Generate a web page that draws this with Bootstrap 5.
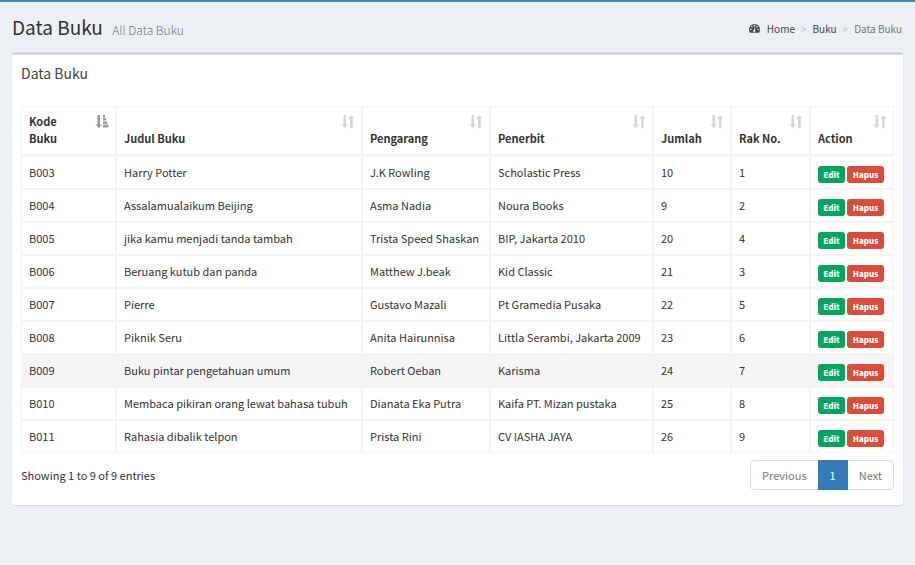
<!DOCTYPE html>
<html lang="id">
<head>
<meta charset="utf-8">
<meta name="viewport" content="width=device-width, initial-scale=1">
<title>Data Buku</title>
<link href="https://cdn.jsdelivr.net/npm/bootstrap@5.3.0/dist/css/bootstrap.min.css" rel="stylesheet">
<style>
body{background:#ecf0f5;color:#333;font:400 11px/17px "Noto Sans CJK SC","Noto Sans",sans-serif;border-top:2px solid #3c8dbc;min-height:100vh}
.page-head{padding:12px 1px 10px 0}
.page-title{font-size:19px;line-height:25px}
.page-title small{font-size:12px;font-weight:300;color:#777;padding-left:5px}
.trail{font-size:10px;line-height:15px;--bs-breadcrumb-divider:'>';--bs-breadcrumb-divider-color:#bbb;--bs-breadcrumb-item-active-color:#777;--bs-breadcrumb-item-padding-x:6px}
.trail a{color:#444;text-decoration:none;gap:6px}
.panel{background:#fff;border-top:3px solid #d2d6de;border-radius:3px;box-shadow:0 1px 1px rgba(0,0,0,.1);padding:9px 9px 15px}
.panel-title{font-size:14px;line-height:18px;color:#444}
.books{table-layout:fixed;border-collapse:separate;border-spacing:0;color:#333;--bs-table-hover-bg:#f5f5f5}
.books>:not(caption)>*>*{padding:7px;border:1px solid #f4f4f4;white-space:nowrap}
.books>thead>tr>th{border-bottom-width:2px;padding:6px 6px 7px 7px;vertical-align:bottom}
.books>tbody>tr>.acts{padding:9px 7px 5px}
.w-kode{width:95px}.w-karang{width:128px}.w-terbit{width:163px}.w-jumlah{width:78px}.w-rak{width:79px}.w-aksi{width:84px}
.sorter{background:none;border:0;padding:0;color:inherit;font-weight:700;min-height:34px;text-align:left}
.sorter svg{width:14px;height:14px;margin-top:2px;color:#d6d6d6}
.sorter svg.on{color:#999}
.books>tbody>tr.picked>td{background:#f5f5f5;box-shadow:none}
.act{font-size:8px;line-height:17px;font-weight:900;padding:0 5px;border:0;border-radius:3px;color:#fff}
.acts>div{gap:2px}
.act-edit{background:#00a65a;min-width:27px}.act-del{background:#dd4b39;min-width:37px}
.pager{--bs-pagination-font-size:11px;--bs-pagination-padding-x:11px;--bs-pagination-padding-y:6px;--bs-pagination-color:#777;--bs-pagination-border-color:#ddd;--bs-pagination-border-radius:4px;--bs-pagination-active-bg:#337ab7;--bs-pagination-active-border-color:#337ab7;--bs-pagination-disabled-color:#777;--bs-pagination-disabled-bg:#fff;--bs-pagination-disabled-border-color:#ddd;line-height:16px}
.foot{padding-top:7px}
</style>
</head>
<body>
<svg class="d-none" aria-hidden="true">
<symbol id="both" viewBox="0 0 14 14"><path fill="currentColor" d="M2.500 0h2.500v9.500h2L3.700 13.200.4 9.500h2.100zM9.100 13.200h2.500V3.700h2L10.300 0 7 3.700h2.100z"/></symbol>
<symbol id="asc" viewBox="0 0 14 14"><path fill="currentColor" d="M2.500 0h2.500v9.500h2L3.700 13.200.4 9.500h2.100zM8 0h2v2.200H8zM8 3h3v2.600H8zM8 6.400h4.200V9H8zM8 9.800h5.500v2.600H8z"/></symbol>
<symbol id="dash" viewBox="0 0 14 12"><path fill="currentColor" fill-rule="evenodd" d="M7 1a6 6 0 0 0-6 6c0 1.300.4 2.500 1 3.500h10c.6-1 1-2.200 1-3.500a6 6 0 0 0-6-6zM3 6.200a.9.9 0 1 0 0 1.800.9.900 0 0 0 0-1.800zM4.200 3.300a.9.900 0 1 0 0 1.800.9.900 0 0 0 0-1.800zM7 2a.9.900 0 1 0 0 1.800A.9.900 0 0 0 7 2zM9.800 3.300a.9.900 0 1 0 0 1.800.9.900 0 0 0 0-1.800zM11 6.200A.9.900 0 1 0 11 8a.9.900 0 0 0 0-1.800zM7.100 4.800l-.6 2.500a1.300 1.300 0 1 0 1 .2L8 5z"/></symbol>
</svg>
<div class="container-fluid px-2 px-sm-0">
<div class="mx-sm-2 px-sm-1">
<header class="page-head d-flex flex-wrap justify-content-between align-items-center">
<h1 class="page-title m-0 fw-normal">Data Buku <small>All Data Buku</small></h1>
<nav aria-label="breadcrumb"><ol class="breadcrumb trail m-0">
<li class="breadcrumb-item"><a href="#" class="d-flex align-items-center"><svg width="13" height="11" aria-hidden="true"><use href="#dash"/></svg>Home</a></li>
<li class="breadcrumb-item"><a href="#">Buku</a></li>
<li class="breadcrumb-item active" aria-current="page">Data Buku</li>
</ol></nav>
</header>
<main class="panel">
<h2 class="panel-title fw-normal mb-4">Data Buku</h2>
<div class="table-responsive">
<table class="table table-hover books m-0">
<colgroup><col class="w-kode"><col><col class="w-karang"><col class="w-terbit"><col class="w-jumlah"><col class="w-rak"><col class="w-aksi"></colgroup>
<thead><tr>
<th aria-sort="ascending"><button class="sorter d-flex w-100 justify-content-between"><span class="align-self-end">Kode<br>Buku</span><svg class="on" aria-hidden="true"><use href="#asc"/></svg></button></th>
<th><button class="sorter d-flex w-100 justify-content-between"><span class="align-self-end">Judul Buku</span><svg aria-hidden="true"><use href="#both"/></svg></button></th>
<th><button class="sorter d-flex w-100 justify-content-between"><span class="align-self-end">Pengarang</span><svg aria-hidden="true"><use href="#both"/></svg></button></th>
<th><button class="sorter d-flex w-100 justify-content-between"><span class="align-self-end">Penerbit</span><svg aria-hidden="true"><use href="#both"/></svg></button></th>
<th><button class="sorter d-flex w-100 justify-content-between"><span class="align-self-end">Jumlah</span><svg aria-hidden="true"><use href="#both"/></svg></button></th>
<th><button class="sorter d-flex w-100 justify-content-between"><span class="align-self-end">Rak No.</span><svg aria-hidden="true"><use href="#both"/></svg></button></th>
<th><button class="sorter d-flex w-100 justify-content-between"><span class="align-self-end">Action</span><svg aria-hidden="true"><use href="#both"/></svg></button></th>
</tr></thead>
<tbody>
<tr><td>B003</td><td>Harry Potter</td><td>J.K Rowling</td><td>Scholastic Press</td><td>10</td><td>1</td><td class="acts"><div class="d-flex"><a href="#" class="btn act act-edit">Edit</a><a href="#" class="btn act act-del">Hapus</a></div></td></tr>
<tr><td>B004</td><td>Assalamualaikum Beijing</td><td>Asma Nadia</td><td>Noura Books</td><td>9</td><td>2</td><td class="acts"><div class="d-flex"><a href="#" class="btn act act-edit">Edit</a><a href="#" class="btn act act-del">Hapus</a></div></td></tr>
<tr><td>B005</td><td>jika kamu menjadi tanda tambah</td><td>Trista Speed Shaskan</td><td>BIP, Jakarta 2010</td><td>20</td><td>4</td><td class="acts"><div class="d-flex"><a href="#" class="btn act act-edit">Edit</a><a href="#" class="btn act act-del">Hapus</a></div></td></tr>
<tr><td>B006</td><td>Beruang kutub dan panda</td><td>Matthew J.beak</td><td>Kid Classic</td><td>21</td><td>3</td><td class="acts"><div class="d-flex"><a href="#" class="btn act act-edit">Edit</a><a href="#" class="btn act act-del">Hapus</a></div></td></tr>
<tr><td>B007</td><td>Pierre</td><td>Gustavo Mazali</td><td>Pt Gramedia Pusaka</td><td>22</td><td>5</td><td class="acts"><div class="d-flex"><a href="#" class="btn act act-edit">Edit</a><a href="#" class="btn act act-del">Hapus</a></div></td></tr>
<tr><td>B008</td><td>Piknik Seru</td><td>Anita Hairunnisa</td><td>Littla Serambi, Jakarta 2009</td><td>23</td><td>6</td><td class="acts"><div class="d-flex"><a href="#" class="btn act act-edit">Edit</a><a href="#" class="btn act act-del">Hapus</a></div></td></tr>
<tr class="picked"><td>B009</td><td>Buku pintar pengetahuan umum</td><td>Robert Oeban</td><td>Karisma</td><td>24</td><td>7</td><td class="acts"><div class="d-flex"><a href="#" class="btn act act-edit">Edit</a><a href="#" class="btn act act-del">Hapus</a></div></td></tr>
<tr><td>B010</td><td>Membaca pikiran orang lewat bahasa tubuh</td><td>Dianata Eka Putra</td><td>Kaifa PT. Mizan pustaka</td><td>25</td><td>8</td><td class="acts"><div class="d-flex"><a href="#" class="btn act act-edit">Edit</a><a href="#" class="btn act act-del">Hapus</a></div></td></tr>
<tr><td>B011</td><td>Rahasia dibalik telpon</td><td>Prista Rini</td><td>CV IASHA JAYA</td><td>26</td><td>9</td><td class="acts"><div class="d-flex"><a href="#" class="btn act act-edit">Edit</a><a href="#" class="btn act act-del">Hapus</a></div></td></tr>
</tbody></table>
</div>
<div class="foot d-flex flex-wrap justify-content-between align-items-center">
<div>Showing 1 to 9 of 9 entries</div>
<nav aria-label="Halaman"><ul class="pagination pager m-0">
<li class="page-item disabled"><a class="page-link" href="#">Previous</a></li>
<li class="page-item active"><a class="page-link" href="#">1</a></li>
<li class="page-item disabled"><a class="page-link" href="#">Next</a></li>
</ul></nav>
</div>
</main>
</div>
</div>
<script src="https://cdn.jsdelivr.net/npm/bootstrap@5.3.0/dist/js/bootstrap.bundle.min.js"></script>
</body>
</html>
